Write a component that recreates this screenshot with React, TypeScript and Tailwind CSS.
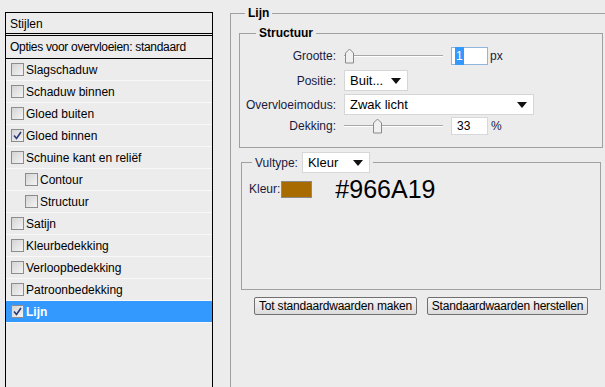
import React from "react";

const font = { fontFamily: '"Liberation Sans", Arial, sans-serif' };

type Item = { label: string; checked?: boolean; indent?: boolean; active?: boolean };

const items: Item[] = [
  { label: "Slagschaduw" },
  { label: "Schaduw binnen" },
  { label: "Gloed buiten" },
  { label: "Gloed binnen", checked: true },
  { label: "Schuine kant en reliëf" },
  { label: "Contour", indent: true },
  { label: "Structuur", indent: true },
  { label: "Satijn" },
  { label: "Kleurbedekking" },
  { label: "Verloopbedekking" },
  { label: "Patroonbedekking" },
  { label: "Lijn", checked: true, active: true },
];

function Checkbox({ checked }: { checked?: boolean }) {
  return (
    <span className="flex h-[13px] w-[13px] shrink-0 items-center justify-center border border-[#8c8c8c] bg-gradient-to-br from-[#d4d4d4] to-[#f4f4f4]">
      {checked && (
        <svg width="9" height="9" viewBox="0 0 9 9">
          <path d="M1 4.5 L3.5 7.5 L8 1" fill="none" stroke="#2a3a7a" strokeWidth="1.6" />
        </svg>
      )}
    </span>
  );
}

function Slider({ pos }: { pos: number }) {
  return (
    <div className="relative h-[16px] w-[99px]">
      <div className="absolute left-0 right-0 top-[7px] h-[1px] bg-[#a8a8a8]" />
      <div className="absolute left-0 right-0 top-[8px] h-[1px] bg-white" />
      <svg className="absolute top-0" style={{ left: pos }} width="11" height="16" viewBox="0 0 11 16">
        <path d="M1.5 15 V5 L5.5 1 L9.5 5 V15 Z" fill="#f0f0f0" stroke="#8a8a8a" />
      </svg>
    </div>
  );
}

function Select({ value, w }: { value: string; w: string }) {
  return (
    <div className={`flex h-[21px] items-center justify-between border border-[#d6d6d6] bg-white pl-[5px] pr-[6px] text-[13px] text-black ${w}`}>
      <span>{value}</span>
      <svg width="10" height="6" viewBox="0 0 10 6">
        <path d="M0 0 H10 L5 6 Z" fill="#111" />
      </svg>
    </div>
  );
}

export default function App() {
  return (
    <div className="flex h-[387px] w-[605px] overflow-hidden bg-[#ececec] text-[11px] text-black" style={font}>
      {/* styles list */}
      <div className="ml-[5px] mt-[12px] h-[390px] w-[208px] shrink-0 border border-black text-[12px]">
        <div className="flex h-[23px] items-center border-b-[3px] border-double border-black pl-[4px] pt-[1px]">Stijlen</div>
        <div className="flex h-[23px] items-center border-b border-black pl-[4px] tracking-[-0.3px]">Opties voor overvloeien: standaard</div>
        {items.map((it) => (
          <div
            key={it.label}
            className={`flex h-[22px] items-center gap-[2px] border-b border-[#f8f8f8] ${it.indent ? "pl-[19px]" : "pl-[5px]"} ${it.active ? "bg-[#3399ff] font-bold text-white" : ""}`}
          >
            <Checkbox checked={it.checked} />
            <span>{it.label}</span>
          </div>
        ))}
      </div>

      {/* settings */}
      <fieldset className="ml-[17px] mt-[6px] flex-1 border-l border-t border-[#a0a0a0] pl-[8px] pr-[2px]">
        <legend className="ml-[6px] px-[3px] text-[12px] font-bold leading-[14px]">Lijn</legend>

        <fieldset className="mt-[6px] h-[122px] border border-[#a0a0a0]">
          <legend className="ml-[16px] px-[3px] text-[12px] font-bold leading-[14px]">Structuur</legend>
          <div className="grid grid-cols-[96px_auto] items-center gap-x-[8px] pt-[5px] text-[12px] text-[#1a1a3c]">
            <span className="text-right">Grootte:</span>
            <div className="flex h-[21px] items-center gap-[8px]">
              <Slider pos={0} />
              <div className="flex h-[18px] w-[37px] items-center border border-[#8fb6dd] bg-white pl-[3px]">
                <span className="bg-[#3399ff] px-[1px] text-white">1</span>
              </div>
              <span className="-ml-[6px]">px</span>
            </div>
            <div className="col-span-2 h-[4px]" />
            <span className="text-right">Positie:</span>
            <Select value="Buit..." w="w-[64px]" />
            <div className="col-span-2 h-[3px]" />
            <span className="text-right">Overvloeimodus:</span>
            <Select value="Zwak licht" w="w-[190px]" />
            <div className="col-span-2 h-[1px]" />
            <span className="text-right">Dekking:</span>
            <div className="flex h-[19px] items-center gap-[8px]">
              <Slider pos={28} />
              <div className="flex h-[18px] w-[37px] items-center border border-[#d8d8d8] bg-white pl-[5px] text-black">33</div>
              <span className="-ml-[5px]">%</span>
            </div>
          </div>
        </fieldset>

        <fieldset className="ml-[2px] mt-[4px] h-[138px] w-[360px] border border-[#a0a0a0]">
          <legend className="ml-[10px] flex items-center gap-[4px] px-[3px] text-[12px] text-[#1a1a3c]">
            <span>Vultype:</span>
            <Select value="Kleur" w="w-[68px]" />
          </legend>
          <div className="flex items-center pl-[7px] pt-[1px] text-[12px] text-[#1a1a3c]">
            <span>Kleur:</span>
            <span className="ml-[1px] h-[17px] w-[31px] border border-[#8a8a8a] bg-[#a86b00]" />
            <span className="ml-[23px] text-[25px] leading-[30px] text-black">#966A19</span>
          </div>
        </fieldset>

        <div className="ml-[15px] mt-[7px] flex gap-[10px]">
          <button className="h-[18px] w-[163px] rounded-[2px] border border-[#707070] bg-gradient-to-b from-[#f6f6f6] to-[#dcdcdc] text-[12px] leading-[16px] tracking-[-0.2px]">
            Tot standaardwaarden maken
          </button>
          <button className="h-[18px] w-[161px] rounded-[2px] border border-[#707070] bg-gradient-to-b from-[#f6f6f6] to-[#dcdcdc] text-[12px] leading-[16px] tracking-[-0.2px]">
            Standaardwaarden herstellen
          </button>
        </div>
      </fieldset>
    </div>
  );
}
